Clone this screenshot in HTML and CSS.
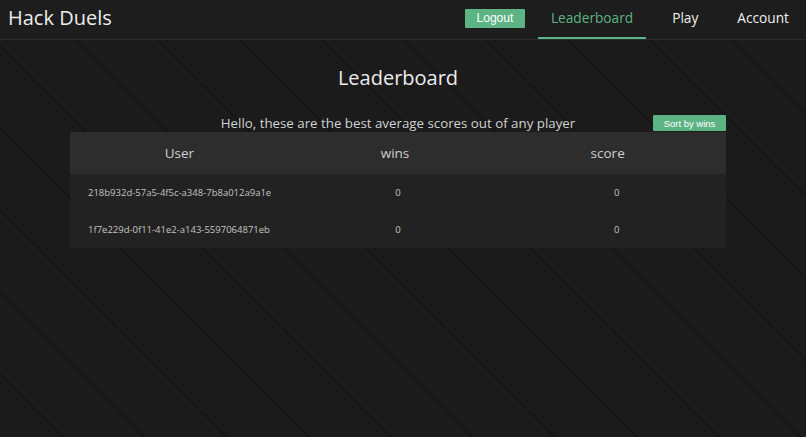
FILE: index.html
```html
<!DOCTYPE html>
<html lang="en">

<head>
    <meta charset="UTF-8">
    <meta name="viewport" content="width=device-width, initial-scale=1.0">
    <title>Hack Duels - Leaderboard</title>
    <link rel="stylesheet" href="styles.css">
</head>

<body>
    <header class="topbar">
        <div class="brand">Hack Duels</div>
        <nav class="nav">
            <button class="btn btn-logout">Logout</button>
            <a href="#" class="nav-link active">Leaderboard</a>
            <a href="#" class="nav-link">Play</a>
            <a href="#" class="nav-link">Account</a>
        </nav>
    </header>

    <main class="page">
        <h1 class="title">Leaderboard</h1>

        <div class="board-top">
            <p class="intro">Hello, these are the best average scores out of any player</p>
            <button class="btn btn-sort">Sort by wins</button>
        </div>

        <table class="board">
            <thead>
                <tr>
                    <th>User</th>
                    <th class="col-wins">wins</th>
                    <th class="col-score">score</th>
                </tr>
            </thead>
            <tbody>
                <tr>
                    <td class="user">218b932d-57a5-4f5c-a348-7b8a012a9a1e</td>
                    <td>0</td>
                    <td>0</td>
                </tr>
                <tr>
                    <td class="user">1f7e229d-0f11-41e2-a143-5597064871eb</td>
                    <td>0</td>
                    <td>0</td>
                </tr>
            </tbody>
        </table>
    </main>
</body>

</html>
```

FILE: styles.css
```css
html,
body {
    margin: 0;
    min-height: 100%;
}

body {
    background-color: #1b1b1b;
    background-image: linear-gradient(45deg, #1b1b1b 48.4%, #141414 50%, #1b1b1b 51.6%);
    background-size: 82px 82px;
    background-position: 36px 0;
    color: #e6e6e6;
    font-family: "Open Sans", sans-serif;
}

.topbar {
    display: flex;
    align-items: center;
    justify-content: space-between;
    height: 39px;
    padding: 0 4px 0 8px;
    background-color: #1d1d1d;
    border-bottom: 1px solid #2b2b2b;
}

.brand {
    margin-bottom: 4px;
    font-size: 20px;
    color: #ececec;
}

.nav {
    display: flex;
    align-items: center;
    gap: 13px;
    height: 100%;
}

.nav-link {
    display: flex;
    align-items: center;
    height: 100%;
    padding: 0 13px 3px;
    box-sizing: border-box;
    border-bottom: 2px solid transparent;
    color: #f0f0f0;
    font-size: 13.7px;
    text-decoration: none;
}

.nav-link.active {
    color: #5cb383;
    border-bottom-color: #5cb383;
}

.btn {
    border: none;
    border-radius: 1px;
    background-color: #5cb383;
    color: #fff;
    font-family: "Liberation Sans", Arial, sans-serif;
}

.btn-logout {
    width: 60px;
    height: 19px;
    margin-bottom: 3px;
    padding: 0;
    font-size: 12px;
}

.btn-sort {
    width: 73px;
    height: 16px;
    margin-bottom: 1px;
    padding: 0;
    font-size: 9.5px;
    justify-self: end;
}

.page {
    width: 656px;
    margin-left: 70px;
    text-align: center;
}

.title {
    margin: 24px 0 0;
    font-size: 20px;
    font-weight: normal;
    line-height: 28px;
    color: #ececec;
}

.board-top {
    display: grid;
    grid-template-columns: 1fr auto 1fr;
    align-items: end;
    margin-top: 22px;
}

.intro {
    grid-column: 2;
    margin: 0;
    font-size: 13.3px;
    line-height: 18px;
    color: #d2d2d2;
}

.board {
    width: 100%;
    table-layout: fixed;
    border-collapse: collapse;
}

.board th {
    height: 42px;
    padding: 0;
    background-color: #2d2d2d;
    font-size: 13.5px;
    font-weight: normal;
    color: #cfcfcf;
}

.board th.col-wins {
    padding-right: 6px;
}

.board th.col-score {
    padding-right: 18px;
}

.board td {
    height: 37px;
    padding: 0;
    background-color: #222;
    font-size: 9.5px;
    color: #c4c4c4;
}

.board td.user {
    text-align: left;
    padding-left: 18px;
}
```
